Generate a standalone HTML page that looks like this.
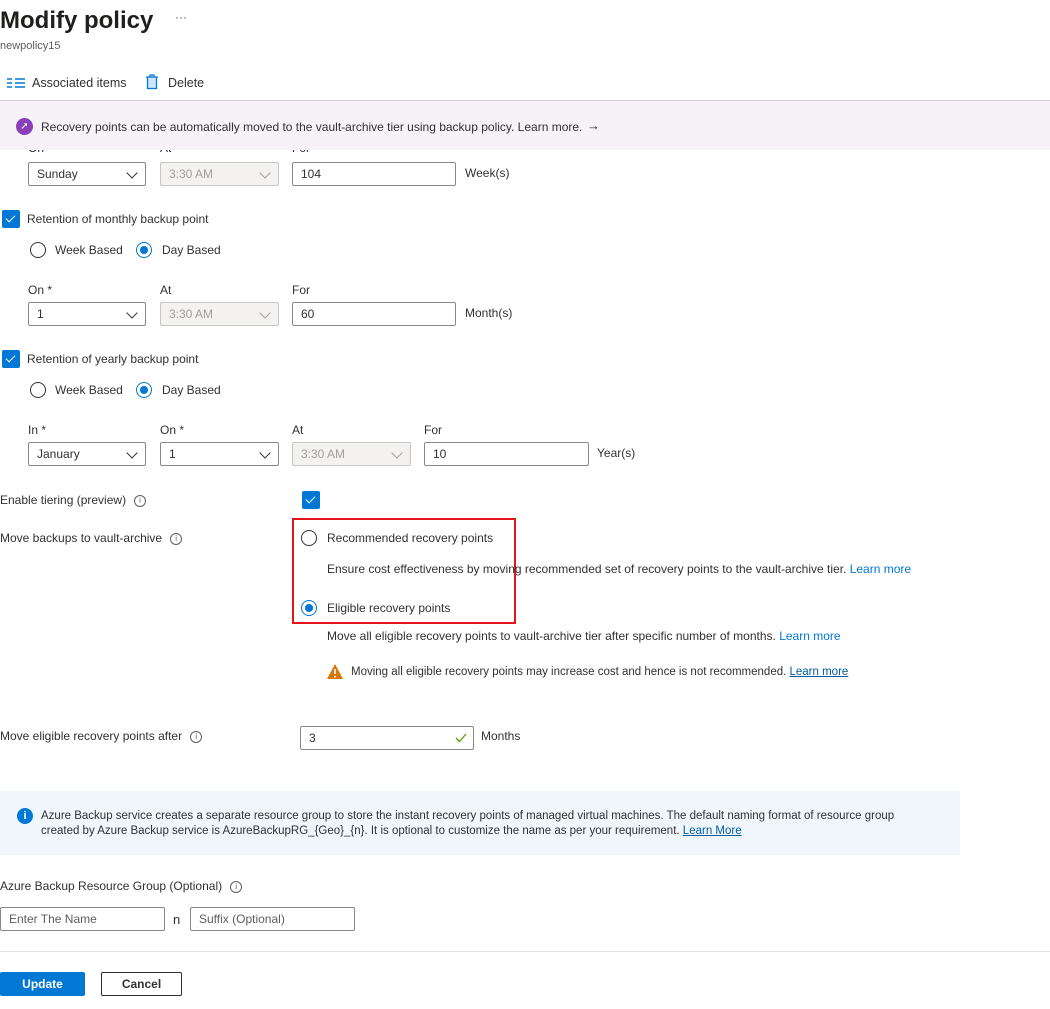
<!DOCTYPE html>
<html><head><meta charset="utf-8"><style>
body{margin:0;width:1050px;height:1009px;position:relative;background:#fff;font-family:"Liberation Sans",sans-serif;font-size:12px;color:#323130;overflow:hidden}
.a{position:absolute;white-space:nowrap}
.box{position:absolute;border:1px solid #8a8886;border-radius:2px;box-sizing:border-box;height:24px;padding-left:8px;line-height:22px;background:#fff}
.dis{background:#f3f2f1;border-color:#c8c6c4;color:#a19f9d}
.chev{position:absolute;right:9px;top:6px;width:7px;height:7px;border-right:1px solid #323130;border-bottom:1px solid #323130;transform:rotate(45deg);}
.dis .chev{border-color:#a19f9d}
.cb{position:absolute;width:18px;height:18px;background:#0078d4;border-radius:2px}
.cb:after{content:"";position:absolute;left:6px;top:3px;width:4px;height:8px;border-right:1.3px solid #fff;border-bottom:1.3px solid #fff;transform:rotate(45deg)}
.r{position:absolute;width:16px;height:16px;border:1px solid #323130;border-radius:50%;box-sizing:border-box}
.r.on{border-color:#0078d4}
.r.on:after{content:"";position:absolute;left:3px;top:3px;width:8px;height:8px;border-radius:50%;background:#0078d4}
.i{display:inline-block;width:10px;height:10px;border:1px solid #605e5c;border-radius:50%;font-size:8px;line-height:10px;text-align:center;margin-left:8px;vertical-align:middle;color:#605e5c}
.lnk{color:#0078d4}
</style></head><body>
<div class="a" style="left:28px;top:150px;width:600px;height:6px;overflow:hidden"><div class="a" style="left:0;top:-9px">On</div><div class="a" style="left:132px;top:-9px">At</div><div class="a" style="left:264px;top:-9px">For</div></div>
<div class="a" style="left:0;top:7px;font-size:24px;font-weight:bold;color:#201f1e">Modify policy</div>
<div class="a" style="left:175px;top:10px;font-size:12px;color:#605e5c">···</div>
<div class="a" style="left:0;top:40px;font-size:11px;color:#605e5c">newpolicy15</div>
<svg class="a" style="left:7px;top:77px" width="18" height="12"><g stroke="#0078d4" stroke-width="1.5"><path d="M0 2h5M8 2h10M0 6h5M8 6h10M0 10h5M8 10h10"/></g></svg>
<div class="a" style="left:32px;top:76px;font-size:12.5px">Associated items</div>
<svg class="a" style="left:145px;top:74px" width="14" height="16"><path d="M1 3h12M5 3V1h4v2M2.5 3.5v11h9v-11" fill="#cfe4fa" stroke="#0078d4" stroke-width="1.3"/></svg>
<div class="a" style="left:168px;top:76px;font-size:12.5px">Delete</div>
<div class="a" style="left:0;top:100px;width:1050px;height:1px;background:#d2d0ce"></div>
<div class="a" style="left:0;top:101px;width:1050px;height:49px;background:#f7f1f8"></div>
<div class="a" style="left:16px;top:118px;width:17px;height:17px;border-radius:50%;background:#8a3fb8;color:#fff;font-size:10px;text-align:center;line-height:17px">➚</div>
<div class="a" style="left:41px;top:120px">Recovery points can be automatically moved to the vault-archive tier using backup policy. Learn more.</div>
<div class="a" style="left:587px;top:118px;font-size:13px">→</div>

<div class="box" style="left:28px;top:162px;width:118px">Sunday<span class="chev"></span></div>
<div class="box dis" style="left:160px;top:162px;width:119px">3:30 AM<span class="chev"></span></div>
<div class="box" style="left:292px;top:162px;width:164px">104</div>
<div class="a" style="left:465px;top:166px">Week(s)</div>

<div class="cb" style="left:2px;top:210px"></div>
<div class="a" style="left:27px;top:212px">Retention of monthly backup point</div>
<div class="r" style="left:30px;top:242px"></div><div class="a" style="left:55px;top:243px">Week Based</div>
<div class="r on" style="left:136px;top:242px"></div><div class="a" style="left:162px;top:243px">Day Based</div>
<div class="a" style="left:28px;top:283px">On *</div><div class="a" style="left:160px;top:283px">At</div><div class="a" style="left:292px;top:283px">For</div>
<div class="box" style="left:28px;top:302px;width:118px">1<span class="chev"></span></div>
<div class="box dis" style="left:160px;top:302px;width:119px">3:30 AM<span class="chev"></span></div>
<div class="box" style="left:292px;top:302px;width:164px">60</div>
<div class="a" style="left:465px;top:306px">Month(s)</div>

<div class="cb" style="left:2px;top:350px"></div>
<div class="a" style="left:27px;top:352px">Retention of yearly backup point</div>
<div class="r" style="left:30px;top:382px"></div><div class="a" style="left:55px;top:383px">Week Based</div>
<div class="r on" style="left:136px;top:382px"></div><div class="a" style="left:162px;top:383px">Day Based</div>
<div class="a" style="left:28px;top:423px">In *</div><div class="a" style="left:160px;top:423px">On *</div><div class="a" style="left:292px;top:423px">At</div><div class="a" style="left:424px;top:423px">For</div>
<div class="box" style="left:28px;top:442px;width:118px">January<span class="chev"></span></div>
<div class="box" style="left:160px;top:442px;width:119px">1<span class="chev"></span></div>
<div class="box dis" style="left:292px;top:442px;width:119px">3:30 AM<span class="chev"></span></div>
<div class="box" style="left:424px;top:442px;width:165px">10</div>
<div class="a" style="left:597px;top:446px">Year(s)</div>

<div class="a" style="left:0;top:493px">Enable tiering (preview)<span class="i">i</span></div>
<div class="cb" style="left:302px;top:491px"></div>
<div class="a" style="left:0;top:531px">Move backups to vault-archive<span class="i">i</span></div>
<div class="a" style="left:292px;top:518px;width:224px;height:106px;border:2px solid #e3161c;box-sizing:border-box"></div>
<div class="r" style="left:301px;top:530px"></div><div class="a" style="left:327px;top:531px">Recommended recovery points</div>
<div class="a" style="left:327px;top:562px">Ensure cost effectiveness by moving recommended set of recovery points to the vault-archive tier. <span class="lnk">Learn more</span></div>
<div class="r on" style="left:301px;top:600px"></div><div class="a" style="left:327px;top:601px">Eligible recovery points</div>
<div class="a" style="left:327px;top:629px">Move all eligible recovery points to vault-archive tier after specific number of months. <span class="lnk">Learn more</span></div>
<svg class="a" style="left:327px;top:664px" width="16" height="15"><path d="M8 0L16 15H0z" fill="#d97706"/><path d="M8 5v5M8 12v1.5" stroke="#fff" stroke-width="1.6"/></svg>
<div class="a" style="left:351px;top:666px;font-size:11.5px">Moving all eligible recovery points may increase cost and hence is not recommended. <span style="color:#005a9e;text-decoration:underline">Learn more</span></div>

<div class="a" style="left:0;top:729px">Move eligible recovery points after<span class="i">i</span></div>
<div class="box" style="left:300px;top:726px;width:174px">3<svg style="position:absolute;right:6px;top:6px" width="12" height="10"><path d="M1 5l3.5 3.5L11 1" stroke="#57a300" stroke-width="1.3" fill="none"/></svg></div>
<div class="a" style="left:481px;top:729px">Months</div>

<div class="a" style="left:0;top:791px;width:960px;height:64px;background:#eff6fc"></div>
<div class="a" style="left:17px;top:808px;width:16px;height:16px;border-radius:50%;background:#0078d4;color:#fff;font-size:11px;font-weight:bold;text-align:center;line-height:16px">i</div>
<div class="a" style="left:41px;top:809px;font-size:11.5px;line-height:15px">Azure Backup service creates a separate resource group to store the instant recovery points of managed virtual machines. The default naming format of resource group<br>created by Azure Backup service is AzureBackupRG_{Geo}_{n}. It is optional to customize the name as per your requirement. <span style="color:#005a9e;text-decoration:underline">Learn More</span></div>

<div class="a" style="left:0;top:879px">Azure Backup Resource Group (Optional)<span class="i">i</span></div>
<div class="box" style="left:0;top:907px;width:165px;color:#605e5c">Enter The Name</div>
<div class="a" style="left:173px;top:912px;font-size:13px">n</div>
<div class="box" style="left:190px;top:907px;width:165px;color:#605e5c">Suffix (Optional)</div>
<div class="a" style="left:0;top:951px;width:1050px;height:1px;background:#e1dfdd"></div>
<div class="a" style="left:0;top:972px;width:85px;height:24px;background:#0078d4;color:#fff;font-weight:bold;text-align:center;line-height:24px;border-radius:2px">Update</div>
<div class="a" style="left:101px;top:972px;width:81px;height:24px;border:1px solid #323130;box-sizing:border-box;font-weight:bold;text-align:center;line-height:22px;border-radius:2px">Cancel</div>
</body></html>
